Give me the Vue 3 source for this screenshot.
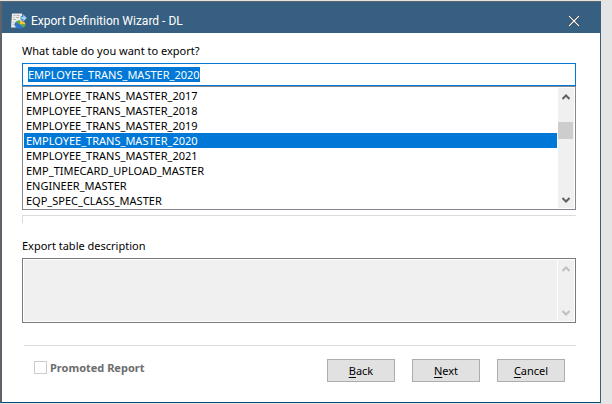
<script setup>
import { onMounted, ref } from 'vue'

const tables = [
  'EMPLOYEE_TRANS_MASTER_2017',
  'EMPLOYEE_TRANS_MASTER_2018',
  'EMPLOYEE_TRANS_MASTER_2019',
  'EMPLOYEE_TRANS_MASTER_2020',
  'EMPLOYEE_TRANS_MASTER_2021',
  'EMP_TIMECARD_UPLOAD_MASTER',
  'ENGINEER_MASTER',
  'EQP_SPEC_CLASS_MASTER',
]
const table = ref('EMPLOYEE_TRANS_MASTER_2020')
const description = ref('')
const promoted = ref(false)
const nameField = ref(null)

onMounted(() => {
  nameField.value.focus()
  nameField.value.select()
})
</script>

<template>
  <div class="desktop">
    <main class="dialog">
      <header class="titlebar">
        <svg class="app-icon" viewBox="0 0 16 16" aria-hidden="true">
          <path d="M1 0.500h10l1 14H0z" fill="#ecebe5" />
          <path d="M2.500 2.500h2M5.500 2.500h3M2.500 4.500h1M5 4.500h3M2 6.500h3" stroke="#b4b5b5" stroke-width="1" />
          <path d="M1.500 9.500h2M1.500 11.500h2" stroke="#c9c5b9" stroke-width="1" />
          <ellipse cx="9" cy="11.500" rx="5.500" ry="4" fill="#2f74cf" />
          <path d="M9 11.500 4.500 9A5.500 4 0 0 1 9 7.500z" fill="#62ac3e" />
          <path d="M9 11.500v-4A5.500 4 0 0 1 14.500 11.500z" fill="#f3c436" />
          <path d="M9 11.500h5.500a5.500 4 0 0 1-2 3z" fill="#5fae3c" />
          <path d="M10 3.500h2V1l4 4-4 4V6.500h-2z" fill="#9fd0f2" stroke="#3f86bf" stroke-width="0.800" />
        </svg>
        <h1>Export Definition Wizard - DL</h1>
        <button class="close" type="button" aria-label="Close">
          <svg viewBox="0 0 12 12"><path d="M1 1l10 10M11 1L1 11" stroke="#16232f" stroke-width="2.400" /><path d="M1 1l10 10M11 1L1 11" stroke="#fff" stroke-width="1.200" /></svg>
        </button>
      </header>

      <form class="body" @submit.prevent>
        <label class="caption" for="table-name">What table do you want to export?</label>
        <input id="table-name" ref="nameField" v-model="table" class="name" type="text" spellcheck="false" autocomplete="off" />

        <div class="list">
          <select v-model="table" size="8" aria-label="Tables">
            <option v-for="name in tables" :key="name" :value="name">{{ name }}</option>
          </select>
          <div class="scrollbar">
            <button type="button" aria-label="Scroll up">
              <svg viewBox="0 0 8 6"><path d="M0.500 5 4 1.500 7.500 5" /></svg>
            </button>
            <div class="track"><div class="thumb"></div></div>
            <button type="button" aria-label="Scroll down">
              <svg viewBox="0 0 8 6"><path d="M0.500 1 4 4.500 7.500 1" /></svg>
            </button>
          </div>
        </div>

        <div class="group-edge"></div>

        <label class="caption" for="description">Export table description</label>
        <div class="description">
          <textarea id="description" v-model="description" readonly></textarea>
          <div class="scrollbar idle">
            <button type="button" disabled aria-label="Scroll description up">
              <svg viewBox="0 0 8 6"><path d="M0.500 5 4 1.500 7.500 5" /></svg>
            </button>
            <button type="button" disabled aria-label="Scroll description down">
              <svg viewBox="0 0 8 6"><path d="M0.500 1 4 4.500 7.500 1" /></svg>
            </button>
          </div>
        </div>

        <footer class="footer">
          <label class="promoted">
            <input v-model="promoted" type="checkbox" disabled />
            <span>Promoted Report</span>
          </label>
          <div class="actions">
            <button type="button"><u>B</u>ack</button>
            <button type="button"><u>N</u>ext</button>
            <button type="button"><u>C</u>ancel</button>
          </div>
        </footer>
      </form>
    </main>
  </div>
</template>

<style>
body {
  background: #e5e5e5;
}
</style>

<style scoped>
.desktop,
.desktop * {
  box-sizing: border-box;
}

.desktop {
  display: flex;
  min-height: 100vh;
  padding: 1px 11px 1px 0;
  background: #e5e5e5;
  font-family: "Noto Sans", "Open Sans", sans-serif;
  font-size: 11px;
  line-height: 15px;
  color: #000;
}

.dialog {
  flex: 1;
  display: flex;
  flex-direction: column;
  min-width: 0;
  border-top: 1px solid #5f6568;
  border-left: 2px solid #5f646b;
  border-right: 1px solid #34607f;
  border-bottom: 1px solid #04496f;
  background: #fff;
}

.titlebar {
  display: flex;
  align-items: center;
  height: 31px;
  padding: 7px 20px 0 9px;
  background: #375f82;
  color: #fff;
}

.app-icon {
  width: 16px;
  height: 16px;
}

h1 {
  flex: 1;
  margin: 0 0 0 4px;
  font-family: Roboto, "Open Sans", sans-serif;
  font-size: 12px;
  font-weight: 400;
  line-height: 16px;
}

button {
  padding: 0;
  border: 0;
  font: inherit;
  color: inherit;
}

.close {
  display: flex;
  background: none;
}

.close svg {
  width: 12px;
  height: 12px;
}

.body {
  flex: 1;
  display: flex;
  flex-direction: column;
  padding: 10px 24px 0 20px;
}

.caption {
  height: 20px;
}

.name {
  width: 100%;
  height: 23px;
  padding: 0 5px 1px;
  border: 1px solid #0078d7;
  border-radius: 0;
  outline: 0;
  background: #fff;
  font: inherit;
  color: #000;
}

.name::selection {
  background: #0078d7;
  color: #fff;
}

.list,
.description {
  display: flex;
  padding: 1px;
  border: 1px solid #828790;
}

select {
  flex: 1;
  min-width: 0;
  height: 120px;
  padding: 0;
  border: 0;
  border-radius: 0;
  outline: 0;
  appearance: none;
  background: #fff;
  font: inherit;
  color: #000;
  overflow: hidden;
  scrollbar-width: none;
}

option {
  height: 15px;
  min-height: 15px;
  padding: 0 2px;
  line-height: 15px;
}

option:checked {
  background: linear-gradient(#0078d7, #0078d7);
  -webkit-text-fill-color: #fff;
}

.scrollbar {
  display: flex;
  flex-direction: column;
  justify-content: space-between;
  width: 16px;
  margin-left: 1px;
  background: #f0f0f0;
}

.scrollbar button {
  display: flex;
  align-items: center;
  justify-content: center;
  width: 15px;
  height: 17px;
  background: none;
}

.scrollbar svg {
  width: 8px;
  height: 6px;
}

.scrollbar path {
  fill: none;
  stroke: #606060;
  stroke-width: 2;
}

.track {
  flex: 1;
  padding-top: 17px;
}

.thumb {
  width: 15px;
  height: 17px;
  background: #cdcdcd;
}

.group-edge {
  height: 8px;
  margin-top: 5px;
  margin-bottom: 15px;
  border-top: 1px solid #dcdcdc;
  border-left: 1px solid #dcdcdc;
}

.description {
  height: 65px;
  border-color: #7a7a7a;
}

textarea {
  flex: 1;
  min-width: 0;
  padding: 0;
  border: 0;
  outline: 0;
  resize: none;
  background: #f0f0f0;
  font: inherit;
}

.idle path {
  stroke: #bfbfbf;
}

.footer {
  display: flex;
  justify-content: space-between;
  margin: 22px 0 19px 2px;
  padding: 13px 11px 0 10px;
  border-top: 1px solid #dcdcdc;
}

.promoted {
  display: flex;
  align-items: flex-start;
  gap: 3px;
  padding-top: 2px;
  font-weight: 700;
  line-height: 13px;
  color: #6d6d6d;
}

.promoted input {
  width: 13px;
  height: 13px;
  margin: 0;
  border: 1px solid #cccccc;
  appearance: none;
  background: #fff;
}

.actions {
  display: flex;
  gap: 17px;
}

.actions button {
  width: 68px;
  height: 23px;
  border: 1px solid #adadad;
  background: #e1e1e1;
}

u {
  text-decoration-thickness: 1px;
  text-underline-offset: 2px;
}
</style>
